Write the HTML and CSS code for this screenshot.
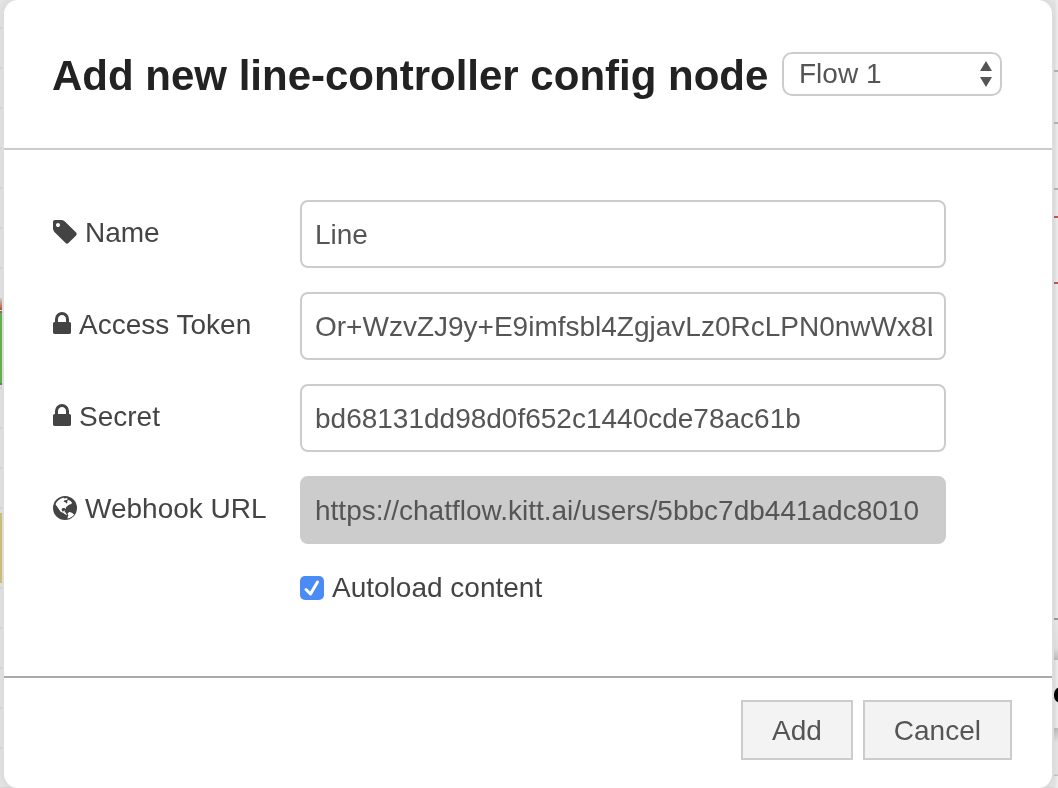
FILE: index.html
```html
<!DOCTYPE html>
<html lang="en">
<head>
    <meta charset="UTF-8">
    <meta name="viewport" content="width=device-width, initial-scale=1.0">
    <title>Add new line-controller config node</title>
    <link rel="stylesheet" href="styles.css">
</head>
<body>

<!-- flow editor behind the dialog -->
<div class="workspace">
    <div class="node node-red"></div>
    <div class="node node-green"></div>
    <div class="node node-yellow"></div>
    <div class="sidebar">
        <span class="line line-tab"></span>
        <span class="line line-toolbar"></span>
        <span class="line line-palette"></span>
        <span class="wire wire-top"></span>
        <span class="wire wire-bottom"></span>
        <span class="line line-section"></span>
        <span class="section section-first"></span>
        <span class="section section-second"></span>
        <span class="dot"></span>
    </div>
</div>

<form class="dialog">
    <div class="dialog-header">
        <h1>Add new line-controller config node</h1>
        <div class="scope">
            <select aria-label="Scope">
                <option>Flow 1</option>
            </select>
            <svg class="arrows" viewBox="0 0 12 26"><path d="M6 0l6 10H0zM6 26l6-10H0z"/></svg>
        </div>
    </div>

    <div class="dialog-body">
        <div class="form-row">
            <label for="name">
                <svg class="icon" viewBox="128 128 1536 1536"><path d="M576 448q0-53-37.500-90.500t-90.500-37.500-90.500 37.500-37.500 90.500 37.500 90.500 90.500 37.500 90.500-37.500 37.500-90.500zm1067 576q0 53-37 90l-491 492q-39 37-91 37-53 0-90-37l-715-716q-38-37-64.500-101t-26.500-117v-416q0-52 38-90t90-38h416q53 0 117 26.500t102 64.500l715 714q37 39 37 91z"/></svg>
                <span>Name</span>
            </label>
            <input type="text" id="name" value="Line">
        </div>
        <div class="form-row">
            <label for="token">
                <svg class="icon icon-lock" viewBox="320 128 1152 1536"><path d="M640 768h512v-192q0-106-75-181t-181-75-181 75-75 181v192zm832 96v576q0 40-28 68t-68 28h-960q-40 0-68-28t-28-68v-576q0-40 28-68t68-28h32v-192q0-184 132-316t316-132 316 132 132 316v192h32q40 0 68 28t28 68z"/></svg>
                <span>Access Token</span>
            </label>
            <input type="text" id="token" value="Or+WzvZJ9y+E9imfsbl4ZgjavLz0RcLPN0nwWx8L">
        </div>
        <div class="form-row">
            <label for="secret">
                <svg class="icon icon-lock" viewBox="320 128 1152 1536"><path d="M640 768h512v-192q0-106-75-181t-181-75-181 75-75 181v192zm832 96v576q0 40-28 68t-68 28h-960q-40 0-68-28t-28-68v-576q0-40 28-68t68-28h32v-192q0-184 132-316t316-132 316 132 132 316v192h32q40 0 68 28t28 68z"/></svg>
                <span>Secret</span>
            </label>
            <input type="text" id="secret" value="bd68131dd98d0f652c1440cde78ac61b">
        </div>
        <div class="form-row">
            <label for="webhook">
                <svg class="icon" viewBox="0 0 24 24">
                    <circle cx="12" cy="12" r="12"/>
                    <path class="land" d="M3 7L5 4.400 8 2.500l2.500-.7 1 .8 2-.6 1.500 1-1.500 1-2 .2-.8 1.600 1.800.4.700 1.400 1.200-.8-.2-2 1.500-.8 1.800.9 1.500 1.800-.7 1.200-2.300.8-1.500 1.300-1.500 1.300-.5 1.900-.9-1.300-2 .1-1 1.600.5 1.700 1.300.1.500-.9 1 .2-.3 1.600 1.300.3.400 1.700 1 .5-.6.500-2-1.300-1.600-1.300-2.200-.8-1.500-2-2-2.900-1.800-2.600z"/>
                    <path class="land" d="M14.600 17.400l1.500-1.400 1.300.3 1.500.4 1.500 1.200 1 .5-1.800 1.900-2.900 1.700-2.300.6.400-1.900.6-1.200z"/>
                </svg>
                <span>Webhook URL</span>
            </label>
            <input type="text" id="webhook" class="readonly" value="https://chatflow.kitt.ai/users/5bbc7db441adc8010" readonly>
        </div>
        <div class="check-row">
            <input type="checkbox" id="autoload" checked>
            <label for="autoload">Autoload content</label>
        </div>
    </div>

    <div class="dialog-footer">
        <button type="button">Add</button>
        <button type="button">Cancel</button>
    </div>
</form>

</body>
</html>
```
FILE: styles.css
```css
* {
    box-sizing: border-box;
}
body {
    margin: 0;
    overflow: hidden;
    font-family: "Liberation Sans", Arial, sans-serif;
    font-size: 28px;
    line-height: 40px;
    color: #444;
}

/* workspace */
.workspace {
    position: fixed;
    inset: 0;
    background: repeating-linear-gradient(#e4e4e4 0 27px, #d8d8d8 27px 29px, #e4e4e4 29px 40px);
}
.node {
    position: absolute;
    left: 0;
    width: 2px;
}
.node-red {
    top: 298px;
    height: 12px;
    background: linear-gradient(#d8d0d0, #b5503c);
}
.node-green {
    top: 311px;
    height: 74px;
    background: #6ab04f;
    border: solid #777;
    border-width: 2px 0;
}
.node-yellow {
    top: 513px;
    height: 70px;
    background: #cdc27c;
}
.sidebar {
    position: absolute;
    top: 0;
    bottom: 0;
    right: 0;
    width: 4px;
    overflow: hidden;
    background: linear-gradient(to right, #e0e0e0, #f0f0f0);
}
.line, .wire, .section, .dot {
    position: absolute;
    left: 0;
    width: 4px;
    height: 2px;
}
.line {
    background: #b4b4b4;
}
.line-tab {
    top: 70px;
}
.line-toolbar {
    top: 122px;
}
.line-palette {
    top: 188px;
}
.wire {
    background: #bd5a5a;
}
.wire-top {
    top: 216px;
}
.wire-bottom {
    top: 282px;
}
.line-section {
    top: 618px;
    background: #999;
}
.section {
    height: 40px;
    background: linear-gradient(#e8e8e8, #e0e0e0 70%, #bbb);
}
.section-first {
    top: 620px;
}
.section-second {
    top: 728px;
    height: 48px;
    background: linear-gradient(#bbb, #e4e4e4 30%, #e4e4e4 95%, #bbb);
}
.dot {
    top: 687px;
    width: 14px;
    height: 16px;
    border-radius: 8px;
    background: #000;
}

/* dialog */
.dialog {
    position: relative;
    margin: 0 6px 0 4px;
    min-height: 100vh;
    display: flex;
    flex-direction: column;
    background: #fff;
    border-radius: 14px;
    box-shadow: 0 0 0 2px #ddd, 0 0 8px rgba(0, 0, 0, 0.1);
}
.dialog-header {
    display: flex;
    align-items: center;
    padding: 48px 50px 48px 48px;
    border-bottom: 2px solid #ccc;
}
h1 {
    flex: 1;
    margin: 0;
    padding-top: 4px;
    font-size: 42px;
    line-height: 48px;
    color: #222;
    white-space: nowrap;
}
.scope {
    position: relative;
    width: 220px;
}
select {
    display: block;
    appearance: none;
    width: 100%;
    height: 44px;
    padding: 0 15px;
    border: 2px solid #ccc;
    border-radius: 10px;
    background: #fff;
    font: inherit;
    color: #555;
}
.arrows {
    position: absolute;
    top: 9px;
    right: 10px;
    width: 12px;
    height: 26px;
    fill: #555;
    pointer-events: none;
}
.dialog-body {
    flex: 1;
    display: flex;
    flex-direction: column;
    gap: 24px;
    padding: 50px 106px 66px 48px;
}
.form-row {
    display: grid;
    grid-template-columns: 248px 1fr;
    align-items: center;
}
.form-row label {
    display: flex;
    align-items: center;
    gap: 8px;
    padding: 0 0 4px 1px;
}
label span {
    padding-top: 2px;
}
.icon {
    width: 24px;
    height: 24px;
    fill: #444;
}
.icon-lock {
    width: 18px;
}
.icon .land {
    fill: #fff;
}
input[type="text"] {
    width: 100%;
    height: 68px;
    padding: 2px 12px 0 13px;
    border: 2px solid #ccc;
    border-radius: 8px;
    background: #fff;
    font: inherit;
    color: #555;
}
input[type="text"].readonly {
    background: #ccc;
}
.check-row {
    display: flex;
    align-items: center;
    gap: 8px;
    padding-left: 248px;
}
input[type="checkbox"] {
    appearance: none;
    width: 24px;
    height: 24px;
    margin: 0;
    border-radius: 5px;
    background: #4b8bf5 url("data:image/svg+xml,%3Csvg xmlns='http://www.w3.org/2000/svg' viewBox='0 0 24 24'%3E%3Cpath d='M6 13.500l4.500 4.500 7-12' fill='none' stroke='white' stroke-width='3' stroke-linecap='round' stroke-linejoin='round'/%3E%3C/svg%3E");
}
.dialog-footer {
    display: flex;
    justify-content: flex-end;
    gap: 10px;
    padding: 22px 40px 28px;
    border-top: 2px solid #aaa;
}
button {
    height: 60px;
    padding: 2px 29px 0;
    border: 2px solid #ccc;
    background: #f3f3f3;
    font: inherit;
    color: #555;
}
```
